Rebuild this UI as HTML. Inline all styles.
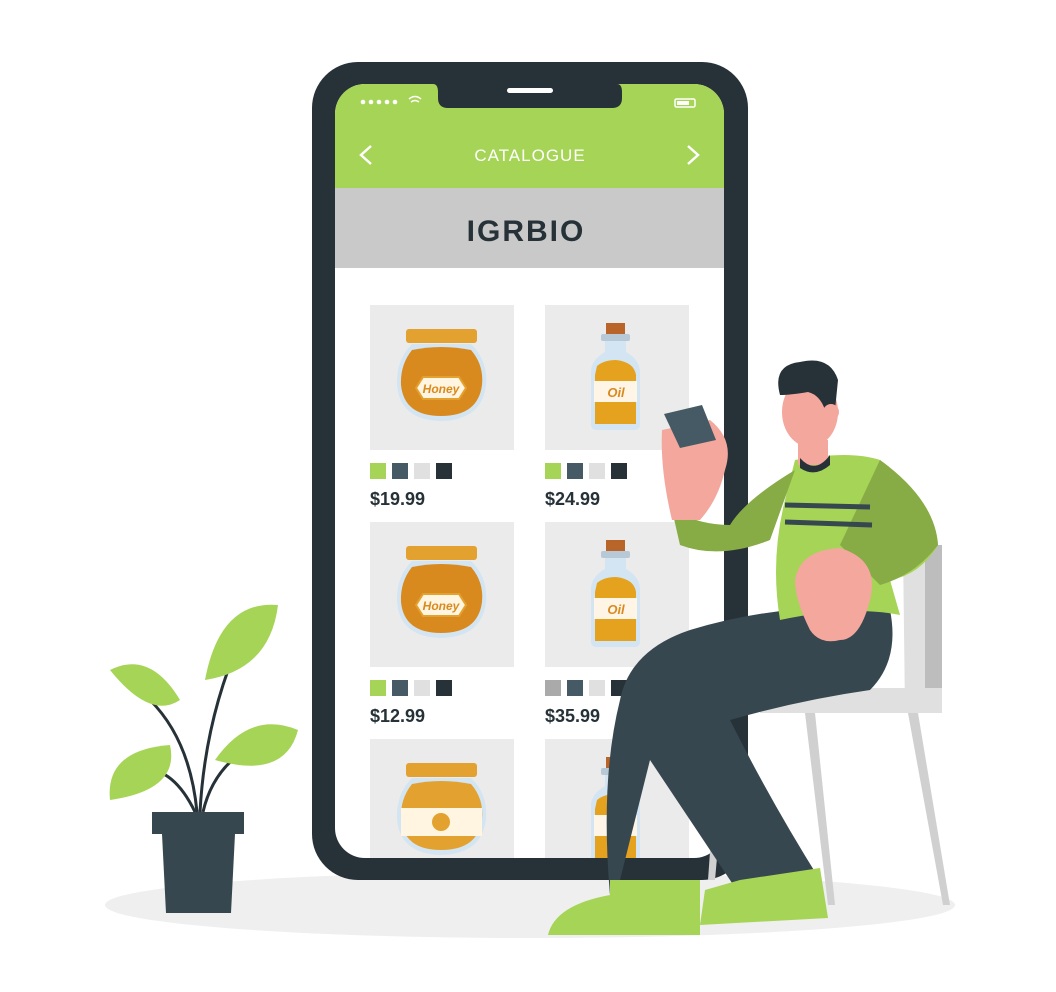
<!DOCTYPE html>
<html><head><meta charset="utf-8"><style>
html,body{margin:0;padding:0;background:#fff;}
svg{display:block}
text{font-family:"Liberation Sans",sans-serif}
</style></head><body>
<svg width="1056" height="992" viewBox="0 0 1056 992" xmlns="http://www.w3.org/2000/svg">
<ellipse cx="530" cy="905" rx="425" ry="33" fill="#efefef"/>
<!-- phone -->
<rect x="312" y="62" width="436" height="818" rx="46" fill="#263238"/>
<clipPath id="scr"><rect x="335" y="84" width="389" height="774" rx="30"/></clipPath>
<g clip-path="url(#scr)">
<rect x="335" y="84" width="389" height="774" fill="#fff"/>
<rect x="335" y="84" width="389" height="104" fill="#a6d456"/>
<rect x="335" y="188" width="389" height="80" fill="#c9c9c9"/>
</g>
<path d="M433 84 H617 Q622 84 622 92 V98 Q622 108 612 108 H448 Q438 108 438 98 V92 Q438 84 433 84Z" fill="#263238"/>
<rect x="507" y="88" width="46" height="5" rx="2.5" fill="#fff"/>
<g fill="#fff"><circle cx="363" cy="102" r="2.3"/><circle cx="371" cy="102" r="2.3"/><circle cx="379" cy="102" r="2.3"/><circle cx="387" cy="102" r="2.3"/><circle cx="395" cy="102" r="2.3"/></g>
<path d="M409 99 Q415 94 421 99 M411 102 Q415 99 419 102" stroke="#fff" stroke-width="1.5" fill="none"/>
<rect x="675" y="99" width="20" height="8" rx="1.5" fill="none" stroke="#fff" stroke-width="1.5"/><rect x="677" y="101" width="12" height="4" fill="#fff"/>
<path d="M371 146 L361 155 L371 164" stroke="#fff" stroke-width="2.5" fill="none"/>
<path d="M688 146 L698 155 L688 164" stroke="#fff" stroke-width="2.5" fill="none"/>
<text x="530" y="161" text-anchor="middle" fill="#fff" font-size="17" letter-spacing="1">CATALOGUE</text>
<text x="526" y="241" text-anchor="middle" fill="#263238" font-size="30" font-weight="bold" letter-spacing="2">IGRBIO</text>
<g clip-path="url(#scr)">
<g fill="#ebebeb">
<rect x="370" y="305" width="144" height="145"/><rect x="545" y="305" width="144" height="145"/>
<rect x="370" y="522" width="144" height="145"/><rect x="545" y="522" width="144" height="145"/>
<rect x="370" y="739" width="144" height="145"/><rect x="545" y="739" width="144" height="145"/>
</g>
<!-- jars -->
<g id="jar">
<rect x="406" y="329" width="71" height="14" rx="3" fill="#e3a12f"/>
<path d="M412 344 H471 Q488 360 486 385 Q482 420 441 421 Q400 420 397 385 Q396 360 412 344Z" fill="#d3e5f2"/>
<path d="M412 350 Q441 344 471 350 Q484 365 482 385 Q478 416 441 416 Q404 416 401 385 Q400 365 412 350Z" fill="#d98a1f"/>
<path d="M423 377 H459 L466 388 L459 399 H423 L416 388Z" fill="#fff5e0" stroke="#e3a12f" stroke-width="2"/>
<text x="441" y="393" text-anchor="middle" font-size="12" font-style="italic" font-weight="bold" fill="#d98a1f">Honey</text>
</g>
<use href="#jar" transform="translate(0,217)"/>
<g transform="translate(0,434)">
<rect x="406" y="329" width="71" height="14" rx="3" fill="#e3a12f"/>
<path d="M412 344 H471 Q488 360 486 385 Q482 420 441 421 Q400 420 397 385 Q396 360 412 344Z" fill="#d3e5f2"/>
<path d="M412 350 Q441 344 471 350 Q484 365 482 385 Q478 416 441 416 Q404 416 401 385 Q400 365 412 350Z" fill="#e3a12f"/>
<rect x="401" y="374" width="81" height="28" fill="#fff5e0"/>
<circle cx="441" cy="388" r="9" fill="#e3a12f"/>
</g>
<g id="oil">
<rect x="606" y="323" width="19" height="11" fill="#b9652a"/>
<rect x="601" y="334" width="29" height="7" rx="2" fill="#b7c9d6"/>
<path d="M605 341 H626 V352 Q640 360 640 372 V425 Q640 430 634 430 H597 Q591 430 591 425 V372 Q591 360 605 352Z" fill="#d3e5f2"/>
<path d="M597 366 Q604 360 616 360 Q634 362 636 375 V424 H595 V375Z" fill="#e5a21f"/>
<rect x="594" y="381" width="43" height="21" fill="#fff5e6"/>
<text x="616" y="397" text-anchor="middle" font-size="13" font-style="italic" font-weight="bold" fill="#d98a1f">Oil</text>
</g>
<use href="#oil" transform="translate(0,217)"/>
<use href="#oil" transform="translate(0,434)"/>
</g>
<!-- swatches -->
<g>
<rect x="370" y="463" width="16" height="16" fill="#a6d456"/><rect x="392" y="463" width="16" height="16" fill="#455a64"/><rect x="414" y="463" width="16" height="16" fill="#e0e0e0"/><rect x="436" y="463" width="16" height="16" fill="#263238"/>
<rect x="545" y="463" width="16" height="16" fill="#a6d456"/><rect x="567" y="463" width="16" height="16" fill="#455a64"/><rect x="589" y="463" width="16" height="16" fill="#e0e0e0"/><rect x="611" y="463" width="16" height="16" fill="#263238"/>
<rect x="370" y="680" width="16" height="16" fill="#a6d456"/><rect x="392" y="680" width="16" height="16" fill="#455a64"/><rect x="414" y="680" width="16" height="16" fill="#e0e0e0"/><rect x="436" y="680" width="16" height="16" fill="#263238"/>
<rect x="545" y="680" width="16" height="16" fill="#aaaaaa"/><rect x="567" y="680" width="16" height="16" fill="#455a64"/><rect x="589" y="680" width="16" height="16" fill="#e0e0e0"/><rect x="611" y="680" width="16" height="16" fill="#263238"/>
</g>
<g font-size="18" font-weight="bold" fill="#263238">
<text x="370" y="505">$19.99</text><text x="545" y="505">$24.99</text>
<text x="370" y="722">$12.99</text><text x="545" y="722">$35.99</text>
</g>
<!-- plant -->
<g stroke="#263238" stroke-width="3" fill="none">
<path d="M197 812 Q190 740 150 700"/><path d="M200 812 Q205 720 240 640"/><path d="M203 812 Q215 760 265 740"/><path d="M195 812 Q170 760 130 770"/>
</g>
<path d="M110 670 Q150 650 180 700 Q150 720 110 670Z" fill="#a6d456"/>
<path d="M205 680 Q220 600 278 605 Q270 670 205 680Z" fill="#a6d456"/>
<path d="M110 800 Q105 750 170 745 Q180 790 110 800Z" fill="#a6d456"/>
<path d="M215 760 Q250 710 298 730 Q285 780 215 760Z" fill="#a6d456"/>
<rect x="152" y="812" width="92" height="22" fill="#37474f"/>
<path d="M162 834 H235 L231 913 H166Z" fill="#37474f"/>
<!-- chair -->
<path d="M903 548 L940 545 L942 712 L905 712Z" fill="#e0e0e0"/>
<rect x="925" y="545" width="17" height="167" fill="#bdbdbd"/>
<rect x="760" y="688" width="182" height="25" fill="#e0e0e0"/>
<path d="M805 713 L815 713 L835 905 L828 905Z" fill="#d0d0d0"/>
<path d="M908 713 L918 713 L950 905 L943 905Z" fill="#d0d0d0"/>
<path d="M720 713 L730 713 L715 880 L708 880Z" fill="#d0d0d0"/>
<!-- man pants -->
<path d="M890 610 Q900 660 870 690 Q800 700 730 720 Q770 800 820 880 L740 895 Q690 820 650 760 L620 880 L610 895 Q600 780 620 700 Q630 650 690 630 Q790 600 890 610Z" fill="#37474f"/>
<path d="M610 880 L700 880 L700 935 L548 935 Q555 905 610 895Z" fill="#a6d456"/>
<path d="M740 880 L820 868 L828 918 L700 925 L705 890Z" fill="#a6d456"/>
<!-- torso -->
<path d="M795 460 Q850 450 880 460 Q935 500 938 545 Q920 575 890 580 L900 615 Q850 605 780 620 Q770 560 785 500Z" fill="#a6d456"/>
<path d="M880 460 Q935 500 938 545 Q915 575 880 585 L840 545 Z" fill="#87ab45"/>
<path d="M785 505 L870 507 M785 522 L872 525" stroke="#37474f" stroke-width="5"/>
<path d="M795 470 Q745 500 730 525 Q700 525 672 510 L680 545 Q720 560 770 540 Z" fill="#87ab45"/>
<!-- arms/hands -->
<path d="M840 548 Q880 560 870 600 Q860 640 840 640 Q820 645 810 630 Q795 600 795 580 Q800 550 840 548Z" fill="#f4a79d"/>
<path d="M672 520 Q660 470 662 430 L710 420 Q735 440 725 470 Q718 500 700 520Z" fill="#f4a79d"/>
<path d="M664 414 L702 405 L716 440 L680 448Z" fill="#455a64"/>
<!-- head -->
<rect x="798" y="440" width="30" height="25" fill="#f4a79d"/>
<path d="M800 458 Q815 475 830 455 L830 465 Q815 478 800 468Z" fill="#263238"/>
<ellipse cx="810" cy="412" rx="28" ry="35" fill="#f4a79d"/>
<path d="M780 395 Q772 365 800 362 Q830 355 838 380 L835 410 L825 410 Q820 395 808 392 Q790 395 780 395Z" fill="#263238"/>
<circle cx="831" cy="412" r="8" fill="#f4a79d"/>
</svg>
</body></html>
